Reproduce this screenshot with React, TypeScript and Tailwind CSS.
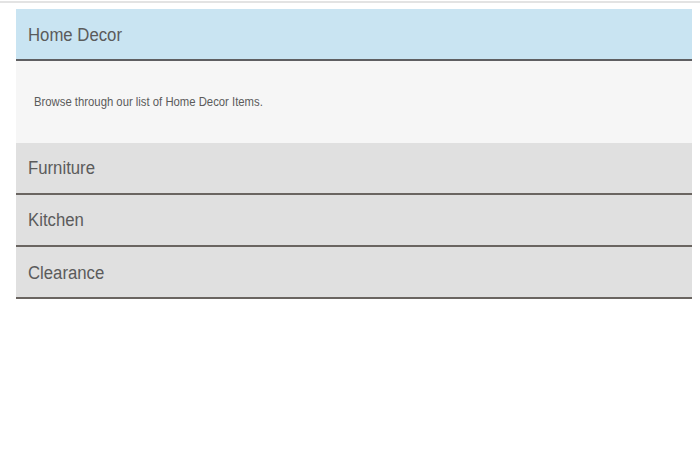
import React from "react";

const items = ["Furniture", "Kitchen", "Clearance"];

export default function App() {
  return (
    <div className="w-[700px] h-[450px] bg-white" style={{ fontFamily: '"Liberation Sans", Arial, sans-serif' }}>
      <div className="pt-px">
        <div className="h-[2px] bg-[#e3e3e3]" />
      </div>
      <div className="ml-4 mr-2 mt-[6px] flex flex-col">
        <div className="h-[52px] bg-[#c9e4f2] border-b-2 border-[#5f5f62] flex items-center pl-3 pt-[2px]">
          <span className="text-[18px] text-[#5b5b5b] inline-block origin-left scale-x-[0.93]">Home Decor</span>
        </div>
        <div className="h-[82px] bg-[#f6f6f6] flex items-center pl-[18px]">
          <span className="text-[13px] text-[#5b5b5b] inline-block origin-left scale-x-[0.87] mt-[-1px]">
            Browse through our list of Home Decor Items.
          </span>
        </div>
        {items.map((it, i) => (
          <div
            key={it}
            className={
              "h-[52px] bg-[#e0e0e0] border-b-2 border-[#6a6561] flex items-center pl-3 " +
              (i === 2 ? "pt-[2px]" : "")
            }
          >
            <span className="text-[18px] text-[#5b5b5b] inline-block origin-left scale-x-[0.93]">{it}</span>
          </div>
        ))}
      </div>
    </div>
  );
}
